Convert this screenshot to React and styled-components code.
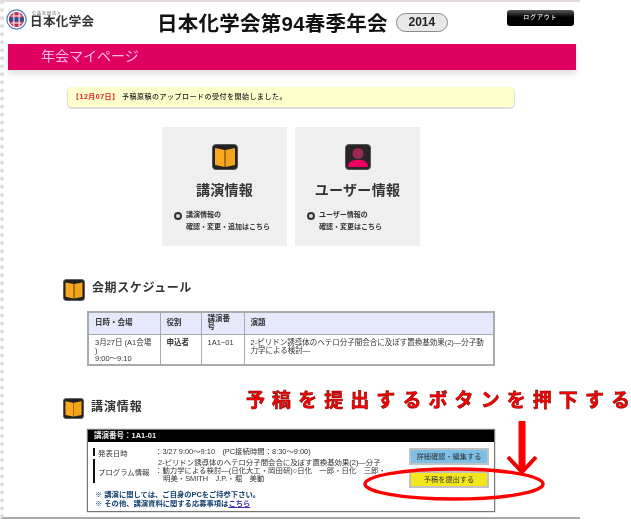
import React from "react";
import styled, { createGlobalStyle } from "styled-components";

const Global = createGlobalStyle`
  html, body { margin: 0; padding: 0; background: #fff; }
  body { font-family: "Liberation Sans", "Noto Sans CJK JP", sans-serif; color: #222; }
`;
const Stage = styled.div`position: relative; width: 631px; height: 520px; overflow: hidden; background: #fff;`;
const Page = styled.div`
  box-sizing: border-box; width: 580px; height: 519px;
  border-top: 2px solid #e4dcdc; border-bottom: 2px solid #a9a9a9;
  border-left: 4px dotted #ddd; filter: blur(0.45px);
`;
const Header = styled.header`display: flex; align-items: flex-start; height: 42px; padding-left: 2px;`;
const Logo = styled.div`display: flex; align-items: flex-end; gap: 3px; width: 151px; padding-top: 7px;`;
const LogoText = styled.div`display: flex; flex-direction: column; align-items: flex-start; margin-bottom: 1px;`;
const LogoSmall = styled.span`font-size: 4px; line-height: 5px; color: #555; margin-left: 2px; letter-spacing: 1px;`;
const LogoName = styled.span`font-size: 12.5px; line-height: 13px; color: #333; font-weight: 700; letter-spacing: .4px; white-space: nowrap;`;
const Title = styled.h1`margin: 9px 0 0; font-size: 20.5px; line-height: 25px; font-weight: 700; color: #111; letter-spacing: .25px; white-space: nowrap;`;
const Year = styled.span`
  box-sizing: border-box; width: 52px; height: 19px; margin: 11px 0 0 8px; border: 1px solid #888; border-radius: 10px;
  background: #e8e8e8; font-size: 12px; font-weight: 700; line-height: 17px; text-align: center; color: #222;
`;
const Logout = styled.div`
  box-sizing: border-box; width: 67px; height: 16px; margin: 8px 0 0 59px; border-radius: 3px;
  background: linear-gradient(#5a5a5a, #000 45%); color: #ccc; font-size: 6px; font-weight: 700; line-height: 15px;
  text-align: center; letter-spacing: .8px;
`;
const Banner = styled.div`
  box-sizing: border-box; width: 568px; height: 26px; margin-left: 4px; padding-left: 33px;
  background: #e0005f; color: #fbe; font-size: 14px; line-height: 24px; box-shadow: 0 4px 6px rgba(0,0,0,.12);
`;
const Notice = styled.div`
  box-sizing: border-box; width: 446px; height: 20px; margin: 17px 0 0 64px; padding-left: 4px; border-radius: 4px;
  background: #ffffcc; box-shadow: 0 1px 1px 1px #ddd; font-size: 7px; line-height: 20px; color: #222; letter-spacing: .5px; white-space: nowrap; font-weight: 500;
`;
const NoticeDate = styled.b`color: #d22;`;
const Cards = styled.div`display: flex; gap: 8px; margin: 20px 0 0 158px;`;
const Card = styled.div`
  box-sizing: border-box; width: 125px; height: 119px; padding: 17px 0 0 12px; background: #efefef;
  display: flex; flex-direction: column;
`;
const CardIcon = styled.div`align-self: center; margin-left: -12px; height: 26px;`;
const CardTitle = styled.div`align-self: center; margin: 12px 0 0 -12px; font-size: 14px; font-weight: 700; letter-spacing: .3px; line-height: 16px; color: #333; white-space: nowrap;`;
const CardLink = styled.div`display: flex; gap: 4px; margin-top: 11px;`;
const Bullet = styled.span`
  box-sizing: border-box; width: 8px; height: 8px; margin-top: 3px; border-radius: 50%; border: 2.5px solid #333; background: #ddd; flex: none;
`;
const CardLinkText = styled.div`font-size: 7px; line-height: 11.5px; color: #333; font-weight: 700;`;
const SectionHead = styled.div`display: flex; align-items: center; gap: 7px; margin: ${p => p.$top}px 0 0 59px; height: 22px;`;
const SectionTitle = styled.h2`margin: 0 0 ${p => p.$lift || 4}px; font-size: 12px; font-weight: 700; letter-spacing: ${p => p.$spacing}px; line-height: 14px; color: #333; white-space: nowrap;`;
const Schedule = styled.table`
  box-sizing: border-box; width: 408px; height: 55px; margin: 10px 0 0 83px; border-collapse: collapse; table-layout: fixed;
  border: 2px solid #aaa; font-size: 7.5px; line-height: 8px; color: #333;
`;
const Th = styled.th`
  box-sizing: border-box; width: ${p => p.$w ? `${p.$w}px` : "auto"}; height: 22px; padding: 0 6px; border: 1.5px solid #aaa;
  background: #e6e8fc; font-weight: 700; text-align: left;
`;
const Td = styled.td`padding: 4px 5px 0 6px; border: 1.5px solid #aaa; vertical-align: top; white-space: nowrap; font-weight: ${p => p.$bold ? 700 : 400};`;
const Talk = styled.section`
  box-sizing: border-box; position: relative; width: 408px; height: 83px; margin: 10px 0 0 83px; border: 1px solid #777; box-shadow: 0 0 1px #555;
`;
const TalkHead = styled.div`height: 12px; background: #000; color: #eee; font-size: 7.5px; line-height: 12px; padding-left: 6px; font-weight: 700;`;
const TalkBody = styled.div`display: flex; padding: 6px 0 0 5px;`;
const TalkInfo = styled.div`width: 316px; font-size: 7.4px; color: #333;`;
const InfoRow = styled.div`display: flex; align-items: center; height: ${p => p.$h}px; margin-bottom: 3px;`;
const InfoLabel = styled.div`
  box-sizing: border-box; width: 62px; height: 100%; padding-left: 3px; border-left: 2px solid #111;
  display: flex; align-items: center; white-space: nowrap;
`;
const InfoValue = styled.div`flex: 1; line-height: 8px; white-space: nowrap;`;
const InfoLine = styled.div`padding-left: ${p => p.$indent || 0}px;`;
const Notes = styled.div`margin: 8px 0 0 2px; font-size: 7.3px; line-height: 8.5px; color: #123f6f; font-weight: 700;`;
const NoteLink = styled.span`color: #3a2fb0; text-decoration: underline;`;
const Buttons = styled.div`display: flex; flex-direction: column; gap: 6px;`;
const ActionButton = styled.div`
  box-sizing: border-box; width: 80px; height: 17px; border: 2px solid #c2c2c2; font-size: 7.2px; line-height: 13px; text-align: center; white-space: nowrap;
  background: ${p => p.$bg}; color: #333;
`;
const Overlay = styled.div`position: absolute; left: 0; top: 0; pointer-events: none;`;
const Callout = styled.div`
  position: absolute; left: 246px; top: 389px; width: 384px; font-size: 19px; line-height: 24px; font-weight: 700; color: #f00;
  text-align: justify; text-align-last: justify; text-justify: inter-character;
  -webkit-text-stroke: .6px #700; filter: blur(.3px);
`;

const BookIcon = ({ size = 26 }) => (
  <svg width={size} height={size} viewBox="0 0 26 26" style={{ display: "block" }}>
    <rect x=".5" y=".5" width="25" height="25" rx="3.5" fill="#222" stroke="#555" />
    <path d="M3 4l9.5 2v17L3 21z" fill="#f9a91f" />
    <path d="M23 4l-9.5 2v17l9.5-2z" fill="#f4a31d" />
    <path d="M12.5 6h1v17h-1z" fill="#c47a10" />
  </svg>
);
const UserIcon = () => (
  <svg width="26" height="26" viewBox="0 0 26 26" style={{ display: "block" }}>
    <rect x=".5" y=".5" width="25" height="25" rx="3.5" fill="#2a2426" stroke="#555" />
    <circle cx="13" cy="9.5" r="5.5" fill="#9a2a55" />
    <path d="M3 23c0-5 4-7 7-7h6c3 0 7 2 7 7z" fill="#ec0062" />
  </svg>
);
const Emblem = () => (
  <svg width="21" height="21" viewBox="0 0 24 24" style={{ flex: "none" }}>
    <circle cx="12" cy="12" r="11" fill="#fff" stroke="#5b7fb8" strokeWidth="1.4" />
    <circle cx="12" cy="12" r="8.6" fill="#b5304f" />
    <rect x="3.5" y="10" width="17" height="4" fill="#2c4f96" />
    <path d="M9 4v16M15 4v16M6 8h12M6 16h12" stroke="#fff" strokeWidth="1.2" />
  </svg>
);

export default function App() {
  return (
    <Stage>
      <Global />
      <Page>
        <Header>
          <Logo>
            <Emblem />
            <LogoText>
              <LogoSmall>公益社団法人</LogoSmall>
              <LogoName>日本化学会</LogoName>
            </LogoText>
          </Logo>
          <Title>日本化学会第94春季年会</Title>
          <Year>2014</Year>
          <Logout>ログアウト</Logout>
        </Header>
        <Banner>年会マイページ</Banner>
        <Notice><NoticeDate>【12月07日】</NoticeDate> 予稿原稿のアップロードの受付を開始しました。</Notice>
        <Cards>
          <Card>
            <CardIcon><BookIcon /></CardIcon>
            <CardTitle>講演情報</CardTitle>
            <CardLink>
              <Bullet />
              <CardLinkText>講演情報の<br />確認・変更・追加はこちら</CardLinkText>
            </CardLink>
          </Card>
          <Card>
            <CardIcon><UserIcon /></CardIcon>
            <CardTitle>ユーザー情報</CardTitle>
            <CardLink>
              <Bullet />
              <CardLinkText>ユーザー情報の<br />確認・変更はこちら</CardLinkText>
            </CardLink>
          </Card>
        </Cards>
        <SectionHead $top={33}>
          <BookIcon size={22} />
          <SectionTitle $spacing={.6}>会期スケジュール</SectionTitle>
        </SectionHead>
        <Schedule>
          <thead>
            <tr>
              <Th $w={72}>日時・会場</Th>
              <Th $w={41}>役割</Th>
              <Th $w={43}>講演番<br />号</Th>
              <Th>演題</Th>
            </tr>
          </thead>
          <tbody>
            <tr>
              <Td>3月27日 (A1会場<br />)<br />9:00～9:10</Td>
              <Td $bold>申込者</Td>
              <Td>1A1−01</Td>
              <Td>2-ピリドン誘導体のヘテロ分子間会合に及ぼす置換基効果(2)―分子動<br />力学による検討―</Td>
            </tr>
          </tbody>
        </Schedule>
        <SectionHead $top={31}>
          <BookIcon size={21} />
          <SectionTitle $spacing={.9} $lift={2}>講演情報</SectionTitle>
        </SectionHead>
        <Talk>
          <TalkHead>講演番号：1A1-01</TalkHead>
          <TalkBody>
            <TalkInfo>
              <InfoRow $h={8}>
                <InfoLabel>発表日時</InfoLabel>
                <InfoValue>：3/27 9:00～9:10　(PC接続時間：8:30～9:00)</InfoValue>
              </InfoRow>
              <InfoRow $h={24}>
                <InfoLabel>プログラム情報</InfoLabel>
                <InfoValue>
                  <InfoLine $indent={3}>2-ピリドン誘導体のヘテロ分子間会合に及ぼす置換基効果(2)―分子</InfoLine>
                  <InfoLine>：動力学による検討―(日化大工・岡田研)○日化　一郎・日化　三郎・</InfoLine>
                  <InfoLine $indent={8}>明美・SMITH　J.P.・堀　美動</InfoLine>
                </InfoValue>
              </InfoRow>
              <Notes>
                ※ 講演に関しては、ご自身のPCをご持参下さい。<br />
                ※ その他、講演資料に関する応募事項は<NoteLink>こちら</NoteLink>
              </Notes>
            </TalkInfo>
            <Buttons>
              <ActionButton $bg="#7cc0e8">詳細確認・編集する</ActionButton>
              <ActionButton $bg="#f5e51b">予稿を提出する</ActionButton>
            </Buttons>
          </TalkBody>
        </Talk>
      </Page>
      <Callout>予稿を提出するボタンを押下する</Callout>
      <Overlay>
        <svg width="631" height="520" viewBox="0 0 631 520" style={{ display: "block" }}>
          <ellipse cx="454" cy="484" rx="89" ry="15" fill="none" stroke="#f00" strokeWidth="3.5" />
          <path d="M522 421v48" stroke="#f00" strokeWidth="7" fill="none" />
          <path d="M508 457l14 15 14-15" stroke="#e00" strokeWidth="4" fill="none" />
        </svg>
      </Overlay>
    </Stage>
  );
}
